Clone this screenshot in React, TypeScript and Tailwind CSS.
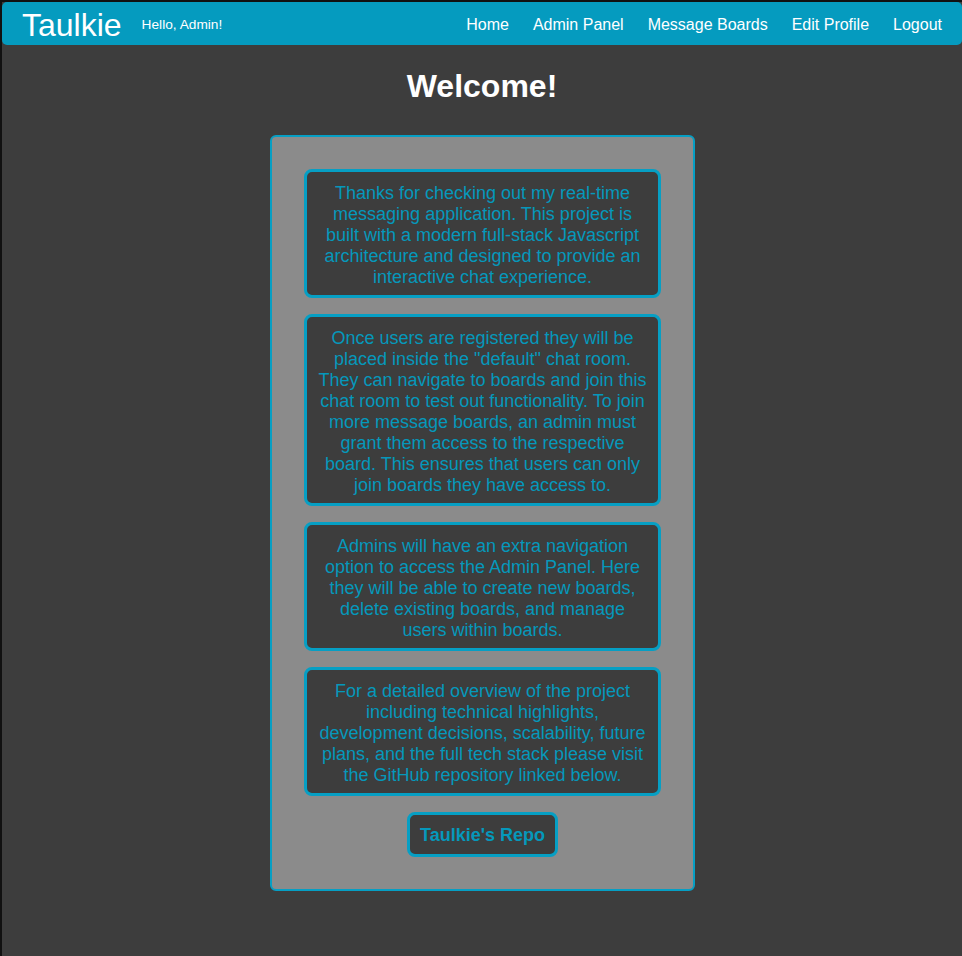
import React from "react";

const paragraphs = [
  "Thanks for checking out my real-time messaging application. This project is built with a modern full-stack Javascript architecture and designed to provide an interactive chat experience.",
  "Once users are registered they will be placed inside the \"default\" chat room. They can navigate to boards and join this chat room to test out functionality. To join more message boards, an admin must grant them access to the respective board. This ensures that users can only join boards they have access to.",
  "Admins will have an extra navigation option to access the Admin Panel. Here they will be able to create new boards, delete existing boards, and manage users within boards.",
  "For a detailed overview of the project including technical highlights, development decisions, scalability, future plans, and the full tech stack please visit the GitHub repository linked below.",
];

export default function App() {
  return (
    <div
      className="min-h-[956px] w-[962px] overflow-hidden border-l-2 border-t-2 border-[#111111] bg-[#3d3d3d]"
      style={{ fontFamily: '"Liberation Sans", Arial, sans-serif' }}
    >
      <nav className="flex h-[43px] items-center rounded-[5px] bg-[#059bbf] pl-[20px] pr-[20px] pt-[2px] text-white">
        <span className="text-[32px] leading-none">Taulkie</span>
        <span className="ml-[20px] mt-[1px] text-[13.7px]">Hello, Admin!</span>
        <div className="ml-auto flex gap-[24px] text-[16px]">
          <span>Home</span>
          <span>Admin Panel</span>
          <span>Message Boards</span>
          <span>Edit Profile</span>
          <span>Logout</span>
        </div>
      </nav>
      <h1 className="mt-[23px] text-center text-[32px] font-bold leading-[37px] text-white">
        Welcome!
      </h1>
      <div className="mt-[30px] flex justify-center pl-[1px]">
        <div className="flex w-[425px] flex-col items-center gap-[16px] rounded-[6px] border-2 border-[#069fc4] bg-[#8b8b8b] p-[32px]">
          {paragraphs.map((p, i) => (
            <div
              key={i}
              className="w-[357px] rounded-[8px] border-[3px] border-[#069fc4] bg-[#3d3d3d] px-[10px] pb-[7px] pt-[11px] text-center text-[18px] leading-[21px] text-[#0598bb]"
            >
              {p}
            </div>
          ))}
          <button className="rounded-[8px] border-[3px] border-[#069fc4] bg-[#3d3d3d] px-[10px] pb-[8px] pt-[10px] text-[18px] font-bold leading-[21px] text-[#0598bb]">
            Taulkie's Repo
          </button>
        </div>
      </div>
    </div>
  );
}
